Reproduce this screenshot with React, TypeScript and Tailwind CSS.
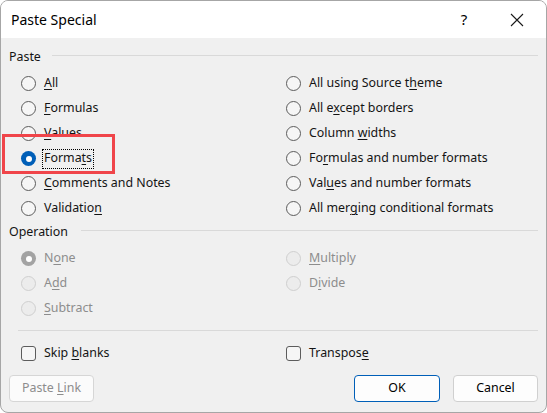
import React from "react";

const FONT = { fontFamily: '"Noto Sans", "Open Sans", sans-serif' };

function Label({ text, disabled }: { text: string; disabled?: boolean }) {
  const i = text.indexOf("&");
  if (i < 0) return <span>{text}</span>;
  const before = text.slice(0, i);
  const key = text.slice(i + 1, i + 2);
  const after = text.slice(i + 2);
  return (
    <span className={disabled ? "text-[#8d8d8d]" : ""}>
      {before}
      <span className="underline decoration-1 underline-offset-[2px]">{key}</span>
      {after}
    </span>
  );
}

function Radio({ state }: { state: "off" | "on" | "disabled" | "disabledOn" }) {
  if (state === "on")
    return (
      <span className="w-[15px] h-[15px] rounded-full bg-[#005fb8] flex items-center justify-center shrink-0">
        <span className="w-[6px] h-[6px] rounded-full bg-white" />
      </span>
    );
  if (state === "disabledOn")
    return (
      <span className="w-[15px] h-[15px] rounded-full bg-[#a3a3a3] flex items-center justify-center shrink-0">
        <span className="w-[6px] h-[6px] rounded-full bg-white" />
      </span>
    );
  if (state === "disabled")
    return <span className="w-[15px] h-[15px] rounded-full border border-[#cfcfcf] bg-[#ececec] shrink-0" />;
  return <span className="w-[15px] h-[15px] rounded-full border border-[#5c5c5c] bg-[#f6f6f6] shrink-0" />;
}

function RadioRow({
  text,
  state = "off",
  focus,
}: {
  text: string;
  state?: "off" | "on" | "disabled" | "disabledOn";
  focus?: boolean;
}) {
  const disabled = state === "disabled" || state === "disabledOn";
  return (
    <div className="h-[25px] flex items-center">
      <Radio state={state} />
      <span
        className={
          focus
            ? "ml-[6px] px-[1px] h-[20px] flex items-center border border-dotted border-black"
            : "ml-[8px]"
        }
      >
        <Label text={text} disabled={disabled} />
      </span>
    </div>
  );
}

function Header({ text, lineMl }: { text: string; lineMl: string }) {
  return (
    <div className="h-[20px] flex items-center pl-[8px] pr-[8px]">
      <span>{text}</span>
      <div className={`flex-1 h-px bg-[#d9d9d9] -mt-[3px] ${lineMl}`} />
    </div>
  );
}

export default function App() {
  return (
    <div className="w-[547px] h-[413px] bg-white text-[12.4px] text-[#141414]" style={FONT}>
      <div className="w-full h-full rounded-[8px] border border-[#a6a6a6] overflow-hidden flex flex-col bg-[#f0f0f0]">
        <div className="h-[37px] bg-white flex items-center shrink-0">
          <span className="pl-[10px] text-[14px] text-black flex-1">Paste Special</span>
          <span className="text-[15px] text-black w-[20px] text-center mr-[36px]">?</span>
          <svg width="14" height="14" viewBox="0 0 14 14" className="mr-[22px]">
            <path d="M1 1 L13 13 M13 1 L1 13" stroke="#1a1a1a" strokeWidth="1.1" />
          </svg>
        </div>
        <div className="relative flex-1 flex flex-col pt-[9px]">
          <Header text="Paste" lineMl="ml-[11px]" />
          <div className="mt-[4px] pl-[20px] grid grid-cols-[265px_1fr]">
            <div className="flex flex-col">
              <RadioRow text="&All" />
              <RadioRow text="&Formulas" />
              <RadioRow text="&Values" />
              <RadioRow text="Forma&ts" state="on" focus />
              <RadioRow text="&Comments and Notes" />
              <RadioRow text="Validatio&n" />
            </div>
            <div className="flex flex-col">
              <RadioRow text="All using Source t&heme" />
              <RadioRow text="All e&xcept borders" />
              <RadioRow text="Column &widths" />
              <RadioRow text="Fo&rmulas and number formats" />
              <RadioRow text="Val&ues and number formats" />
              <RadioRow text="All mer&ging conditional formats" />
            </div>
          </div>
          <div className="mt-[1px]">
            <Header text="Operation" lineMl="ml-[13px]" />
          </div>
          <div className="mt-[4px] pl-[20px] grid grid-cols-[265px_1fr]">
            <div className="flex flex-col">
              <RadioRow text="N&one" state="disabledOn" />
              <RadioRow text="A&dd" state="disabled" />
              <RadioRow text="&Subtract" state="disabled" />
            </div>
            <div className="flex flex-col">
              <RadioRow text="&Multiply" state="disabled" />
              <RadioRow text="D&ivide" state="disabled" />
            </div>
          </div>
          <div className="mt-[9px] ml-[17px] mr-[8px] h-px bg-[#d9d9d9]" />
          <div className="mt-[10px] pl-[20px] grid grid-cols-[265px_1fr]">
            <div className="h-[25px] flex items-center">
              <span className="w-[15px] h-[15px] rounded-[3px] border border-[#5c5c5c] bg-[#f6f6f6]" />
              <span className="ml-[8px]">
                <Label text="Skip &blanks" />
              </span>
            </div>
            <div className="h-[25px] flex items-center">
              <span className="w-[15px] h-[15px] rounded-[3px] border border-[#5c5c5c] bg-[#f6f6f6]" />
              <span className="ml-[8px]">
                <Label text="Transpos&e" />
              </span>
            </div>
          </div>
          <div className="mt-[9px] flex items-center pl-[8px]">
            <button className="w-[85px] h-[27px] rounded-[4px] border border-[#d6d6d6] bg-[#fbfbfb] text-[#8d8d8d]">
              <Label text="Paste &Link" disabled />
            </button>
            <div className="flex-1" />
            <button className="w-[86px] h-[27px] rounded-[4px] border border-[#005fb8] bg-[#fdfdfd] text-black">
              OK
            </button>
            <button className="ml-[13px] mr-[8px] w-[85px] h-[27px] rounded-[4px] border border-[#d0d0d0] bg-[#fdfdfd] text-black">
              Cancel
            </button>
          </div>
          <div className="pointer-events-none absolute left-[1px] top-[96px] w-[113px] h-[40px] border-[3px] border-[#f0454a]" />
        </div>
      </div>
    </div>
  );
}
